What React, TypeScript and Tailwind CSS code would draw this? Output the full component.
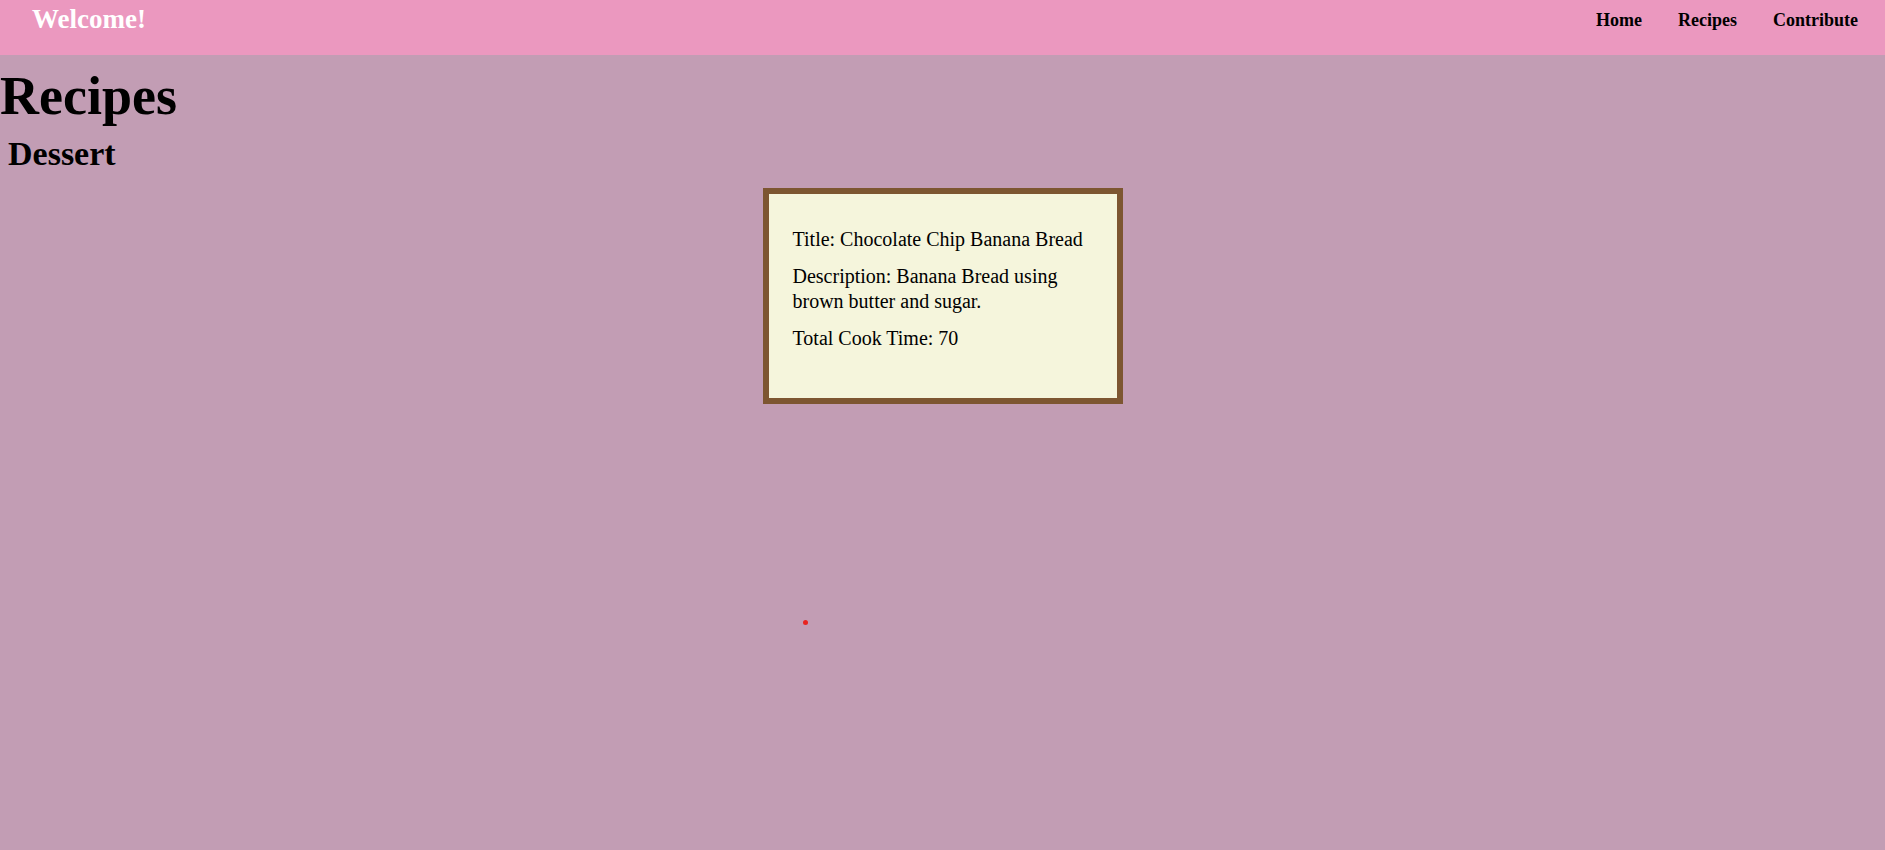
export default function App() {
  return (
    <div className="min-h-[850px] bg-[#c29db4] font-['Liberation_Serif',serif] text-black">
      {/* top bar */}
      <nav className="h-[55px] bg-[#eb98bf] flex items-start justify-between pl-[32px] pr-[27px]">
        <h3 className="text-[27px] font-bold text-white leading-none pt-[6px]">Welcome!</h3>
        <ul className="flex gap-[36px] text-[18px] font-bold leading-none pt-[11px]">
          <li>Home</li>
          <li>Recipes</li>
          <li>Contribute</li>
        </ul>
      </nav>

      <h1 className="text-[54px] font-bold leading-none pt-[14px]">Recipes</h1>
      <h2 className="text-[34px] font-bold leading-none pl-[8px] pt-[14px]">Dessert</h2>

      <div className="flex justify-center pt-[17px]">
        <div className="w-[360px] border-[6px] border-[#7d5631] bg-[#f5f5dc] px-[24px] pt-[33px] pb-[47px] text-[20px] leading-[25px]">
          <p>Title: Chocolate Chip Banana Bread</p>
          <p className="mt-[12px]">Description: Banana Bread using brown butter and sugar.</p>
          <p className="mt-[12px]">Total Cook Time: 70</p>
        </div>
      </div>

      <div className="flex pl-[803px] pt-[216px]">
        <span className="block w-[5px] h-[5px] rounded-full bg-[#e8231f]" />
      </div>
    </div>
  );
}
